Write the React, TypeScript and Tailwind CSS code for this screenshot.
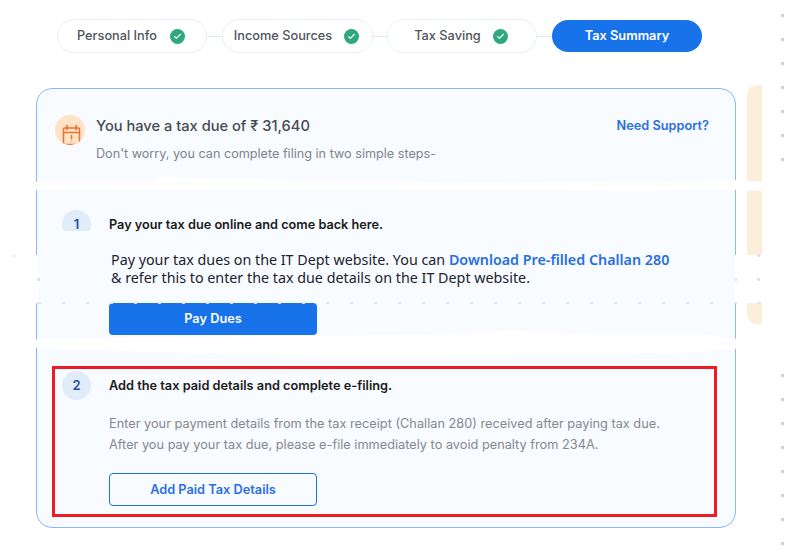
import { Check } from 'lucide-react'

const steps = [
  { label: 'Personal Info', width: 'w-[150px]', gap: 'gap-[13px]', line: 'w-[15px]' },
  { label: 'Income Sources', width: 'w-[151px]', gap: 'gap-[12px]', line: 'w-[14px]' },
  { label: 'Tax Saving', width: 'w-[150px]', gap: 'gap-[12px]', line: 'w-[15px]' },
]

function StepPill({ label, width, gap, line }: { label: string; width: string; gap: string; line: string }) {
  return (
    <>
      <div className={`flex h-[34px] ${width} ${gap} items-center justify-center rounded-full border border-[#e6effb] bg-white pr-[2px] text-[12.75px] font-medium text-[#4f5560]`}>
        {label}
        <span className="flex h-[15px] w-[15px] items-center justify-center rounded-full bg-[#2ea97d]">
          <Check size={9} strokeWidth={3} className="text-white" />
        </span>
      </div>
      <div className={`h-px ${line} bg-[#dbe7f8]`} />
    </>
  )
}

function CalendarIcon() {
  return (
    <svg width="30" height="30" viewBox="0 0 30 30" fill="none" stroke="#ef7033" strokeWidth="1.5">
      <rect x="8.5" y="13" width="16" height="16.5" rx="1" />
      <path d="M8.5 17.5h16" />
      <path d="M12 10.5v4M21 10.5v4" strokeLinecap="round" strokeWidth="1.7" />
      <path d="M16.5 20v4M16.5 25.4v1.2" strokeWidth="1.5" />
    </svg>
  )
}

function DotColumn() {
  return (
    <div className="ml-[19px] flex flex-col pt-[14px]">
      {[0, 1, 2, 3, 4, 5, 6].map((i) => (
        <div key={i} className="mb-[21px] h-[3px] w-[3px] shrink-0 bg-[#ccd0d8]" />
      ))}
      <div className="h-[192px] shrink-0" />
      {[0, 1, 2, 3, 4, 5, 6, 7].map((i) => (
        <div key={i} className="mb-[21px] h-[3px] w-[3px] shrink-0 bg-[#ccd0d8]" />
      ))}
    </div>
  )
}

// the white brush marks left on the screenshot, drawn over the page
function EraseMarks() {
  const rowDots = Array.from({ length: 31 }, (_, i) => 38 + i * 24)
  return (
    <svg className="pointer-events-none absolute top-0 left-0" width="795" height="551">
      <g fill="#fff">
        <path d="M30 182 L150 182 L160 177 L230 178 L300 181 L480 183 L680 181 L735 180 L770 182 L770 191 L735 190 L640 191 L480 190 L300 190 L150 189 L30 190 Z" />
        <path d="M30 340 L60 338 L140 337 L300 336 L420 335 L510 331 L600 334 L700 334 L745 340 L745 348 L700 352 L600 354 L430 357 L320 357 L210 353 L120 351 L60 349 L30 347 Z" />
        <rect x="0" y="255" width="38" height="48" />
        <rect x="735" y="255" width="60" height="48" />
      </g>
      <g fill="#dfe2e8">
        <rect x="13" y="255" width="2" height="2" />
        <rect x="37" y="278" width="3" height="3" />
        <rect x="735" y="278" width="2" height="3" />
        <rect x="757" y="254" width="3" height="3" />
        <rect x="757" y="278" width="3" height="3" />
        {rowDots.map((x) => (
          <rect key={x} x={x} y="302" width="3" height="2" />
        ))}
      </g>
    </svg>
  )
}

export default function App() {
  return (
    <div className="relative flex h-[551px] w-[795px] overflow-hidden bg-white font-['Inter',sans-serif]">
      <div className="ml-[36px] w-[700px] shrink-0 pt-[19px]">
        <div className="ml-[21px] flex items-center">
          {steps.map((s) => (
            <StepPill key={s.label} {...s} />
          ))}
          <div className="flex h-[32px] w-[150px] items-center justify-center rounded-full bg-[#1873ea] text-[12.75px] font-semibold text-white">
            Tax Summary
          </div>
        </div>

        <div className="mt-[35px] h-[440px] rounded-[16px] border border-[#8ab8f8] bg-[#f8fbff]">
          {/* шапка */}
          <div className="flex justify-between pt-[26px] pr-[26px] pl-[18px]">
            <div className="flex items-start">
              <div className="h-[30px] w-[30px] overflow-hidden rounded-full bg-[#fee3c6]">
                <CalendarIcon />
              </div>
              <div className="ml-[11px]">
                <div className="h-[22px] text-[14.65px] leading-[22px] font-medium text-[#464a53]">
                  You have a tax due of ₹ 31,640
                </div>
                <div className="mt-[7px] h-[20px] text-[12.65px] leading-[20px] text-[#80848c]">
                  Don't worry, you can complete filing in two simple steps-
                </div>
              </div>
            </div>
            <div className="h-[22px] text-[12.75px] leading-[22px] font-semibold text-[#2a6fdf]">Need Support?</div>
          </div>

          {/* шаг 1 */}
          <div className="mt-[46px] pl-[25px]">
            <div className="flex items-center">
              <div className="h-[29px] w-[29px]">
                <div className="h-[21px] overflow-hidden">
                  <div className="flex h-[29px] w-[29px] items-center justify-center rounded-full bg-[#e1ecfb] text-[13px] font-semibold text-[#27509c]">
                    1
                  </div>
                </div>
              </div>
              <div className="ml-[18px] text-[12.7px] font-semibold text-[#1a1a1a]">Pay your tax due online and come back here.</div>
            </div>
            <p className="mt-[12px] ml-[49px] text-[14.3px] leading-[18px] font-['Noto_Sans',sans-serif] text-[#22222e]">
              Pay your tax dues on the IT Dept website. You can{' '}
              <span className="font-semibold text-[#2a6fdf]">Download Pre-filled Challan 280</span>
              <br />& refer this to enter the tax due details on the IT Dept website.
            </p>
            <div className="mt-[16px] ml-[47px] flex h-[32px] w-[208px] items-center justify-center rounded-[4px] bg-[#1873ea] text-[12.75px] font-semibold text-white">
              Pay Dues
            </div>
          </div>

          {/* шаг 2 */}
          <div className="mt-[31px] ml-[15px] h-[151px] w-[665px] border-[3px] border-[#ed1c24] pt-[2px] pl-[7px]">
            <div className="flex items-center">
              <div className="flex h-[29px] w-[29px] items-center justify-center rounded-full bg-[#e1ecfb] text-[13px] font-semibold text-[#27509c]">
                2
              </div>
              <div className="ml-[18px] text-[12.75px] font-semibold text-[#1a1a1a]">Add the tax paid details and complete e-filing.</div>
            </div>
            <div className="mt-[13px] ml-[47px] text-[12.75px] leading-[21px] text-[#85888f]">
              Enter your payment details from the tax receipt (Challan 280) received after paying tax due.
              <br />
              After you pay your tax due, please e-file immediately to avoid penalty from 234A.
            </div>
            <div className="mt-[18px] ml-[47px] flex h-[33px] w-[208px] items-center justify-center rounded-[4px] border border-[#1873ea] text-[12.75px] font-semibold text-[#2a6fdf]">
              Add Paid Tax Details
            </div>
          </div>
        </div>
      </div>

      <div className="mt-[85px] ml-[11px] h-[239px] w-[15px] shrink-0 rounded-l-[10px] bg-[#fdeedb]" />
      <DotColumn />
      <EraseMarks />
    </div>
  )
}
